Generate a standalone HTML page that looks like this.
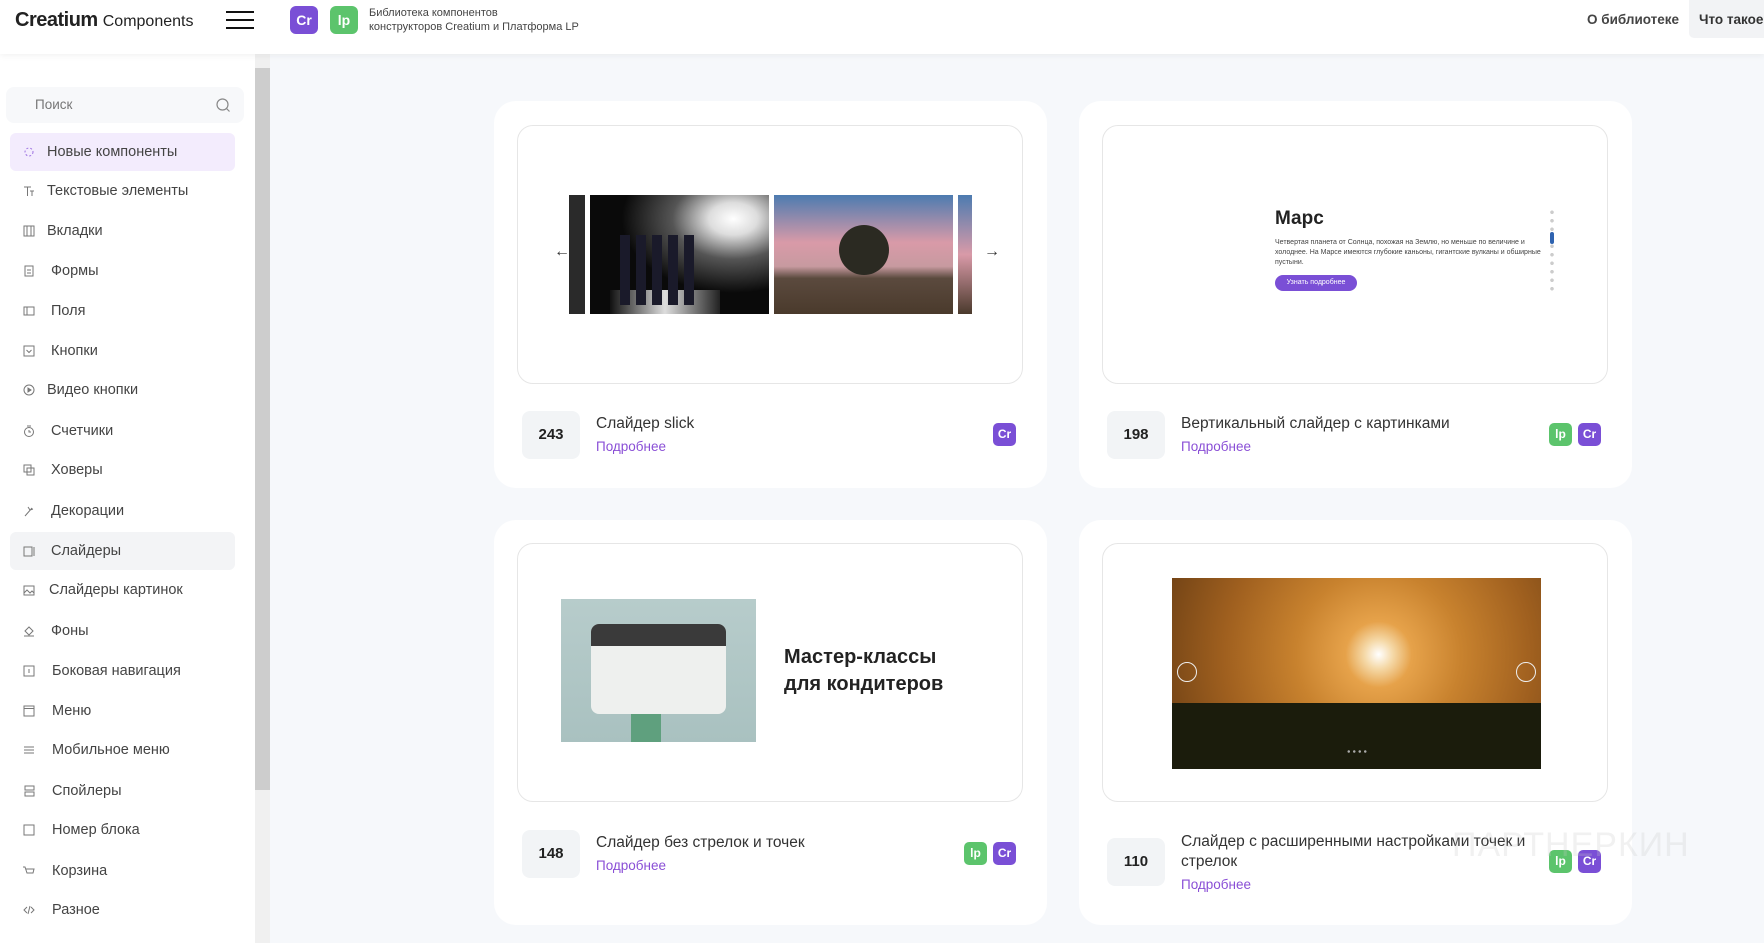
<!DOCTYPE html>
<html><head><meta charset="utf-8"><style>
*{margin:0;padding:0;box-sizing:border-box}
body{width:1764px;height:943px;overflow:hidden;background:#f6f8fb;font-family:"Liberation Sans","Noto Sans CJK SC",sans-serif;position:relative;color:#333}
.a{position:absolute}
.hdr{left:0;top:0;width:1764px;height:54px;background:#fff;box-shadow:0 2px 6px rgba(0,0,0,.05);z-index:5}
.side{left:0;top:54px;width:255px;height:889px;background:#fff}
.item{position:absolute;left:10px;width:225px;height:38px;border-radius:6px;font-size:14.5px;color:#444;line-height:38px}
.item span{position:absolute;left:37px;top:0}
.item svg{position:absolute;left:13px;top:13px}
.item svg *{stroke:#777}
.card{position:absolute;width:553px;background:#fff;border-radius:22px}
.prev{position:absolute;left:23px;width:506px;height:259px;border:1px solid #e6e6e6;border-radius:16px;background:#fff;overflow:hidden}
.num{position:absolute;left:28px;width:58px;height:48px;background:#f2f4f6;border-radius:8px;font-weight:bold;font-size:15px;text-align:center;line-height:48px;color:#222}
.ttl{position:absolute;left:102px;font-size:15.5px;color:#333}
.lnk{position:absolute;left:102px;font-size:13.5px;color:#8a4fd6}
.bd{position:absolute;width:23px;height:23px;border-radius:5px;color:#fff;font-weight:bold;font-size:12px;text-align:center;line-height:23px}
.pu{background:#7a4fd6}.gr{background:#5cc46c}
</style></head><body>
<div class="a hdr">
 <div class="a" style="left:15px;top:9px;font-size:20px;font-weight:bold;color:#222;letter-spacing:-.5px">Creatium <span style="font-weight:normal;font-size:16px;letter-spacing:0">Components</span></div>
 <div class="a" style="left:226px;top:11px;width:28px;height:2px;background:#111"></div>
 <div class="a" style="left:226px;top:19px;width:28px;height:2px;background:#111"></div>
 <div class="a" style="left:226px;top:27px;width:28px;height:2px;background:#111"></div>
 <div class="a bd pu" style="left:290px;top:6px;width:28px;height:28px;line-height:28px;border-radius:6px;font-size:14px">Cr</div>
 <div class="a bd gr" style="left:330px;top:6px;width:28px;height:28px;line-height:28px;border-radius:6px;font-size:14px">lp</div>
 <div class="a" style="left:369px;top:6px;font-size:11px;line-height:14px;color:#444">Библиотека компонентов<br>конструкторов Creatium и Платформа LP</div>
 <div class="a" style="left:1587px;top:12px;font-size:13.5px;font-weight:bold;color:#444">О библиотеке</div>
 <div class="a" style="left:1689px;top:0;width:75px;height:38px;background:#f2f3f5;border-radius:0 0 0 5px;font-size:13.5px;font-weight:bold;color:#333;padding:12px 0 0 10px;white-space:nowrap;overflow:hidden">Что такое</div>
</div>
<div class="a side">
 <div class="a" style="left:6px;top:33px;width:238px;height:36px;background:#f7f8fa;border-radius:8px;font-size:13.5px;color:#777;padding:10px 0 0 29px">Поиск
  <svg class="a" style="left:209px;top:10px" width="16" height="16" viewBox="0 0 16 16"><circle cx="7.5" cy="7.5" r="5.5" fill="none" stroke="#888" stroke-width="1.2"/><path d="M11.5 11.5l3 3" stroke="#888" stroke-width="1.2"/></svg></div>
</div>
<div class="a" style="left:255px;top:54px;width:15px;height:889px;background:#f0f0f0"></div>
<div class="a" style="left:255px;top:68px;width:15px;height:722px;background:#cdcdcd"></div>

<div class="item" style="top:133px;background:#f3ecfd"><svg width="12" height="12"><circle cx="6" cy="6" r="4" fill="none" style="stroke:#9b6fe0" stroke-dasharray="2 2"/></svg><span>Новые компоненты</span></div>
<div class="item" style="top:172px"><svg width="12" height="12"><path d="M1 2h7M4.5 2v9M7 6h4M9 6v5" fill="none"/></svg><span>Текстовые элементы</span></div>
<div class="item" style="top:212px"><svg width="12" height="12"><rect x="1" y="1" width="10" height="10" fill="none"/><path d="M4 1v10M8 1v10"/></svg><span>Вкладки</span></div>
<div class="item" style="top:252px"><svg width="12" height="12"><rect x="2" y="1" width="8" height="10" fill="none"/><path d="M4 5h4M4 8h4"/></svg><span style="left:41px">Формы</span></div>
<div class="item" style="top:292px"><svg width="12" height="12"><rect x="1" y="2" width="10" height="8" fill="none"/><path d="M4 2v8"/></svg><span style="left:41px">Поля</span></div>
<div class="item" style="top:332px"><svg width="12" height="12"><rect x="1" y="1" width="10" height="10" fill="none"/><path d="M3.5 5l2.5 2.5L8.5 5" fill="none"/></svg><span style="left:41px">Кнопки</span></div>
<div class="item" style="top:371px"><svg width="12" height="12"><circle cx="6" cy="6" r="5" fill="none"/><path d="M5 4v4l3-2z" fill="#777"/></svg><span>Видео кнопки</span></div>
<div class="item" style="top:412px"><svg width="12" height="12"><circle cx="6" cy="7" r="4.5" fill="none"/><path d="M4 1h4M6 5v2h2" fill="none"/></svg><span style="left:41px">Счетчики</span></div>
<div class="item" style="top:451px"><svg width="12" height="12"><rect x="1" y="1" width="7" height="7" fill="none"/><rect x="4" y="4" width="7" height="7" fill="none"/></svg><span style="left:41px">Ховеры</span></div>
<div class="item" style="top:492px"><svg width="12" height="12"><path d="M2 11L9 3M5 2l2 3 3-1" fill="none"/></svg><span style="left:41px">Декорации</span></div>
<div class="item" style="top:532px;background:#f3f4f6"><svg width="12" height="12"><rect x="1" y="2" width="8" height="9" fill="none"/><path d="M11 2v9"/></svg><span style="left:41px">Слайдеры</span></div>
<div class="item" style="top:571px"><svg width="12" height="12"><rect x="1" y="2" width="10" height="9" fill="none"/><path d="M1 9l3-3 3 3 2-2 2 2" fill="none"/></svg><span style="left:39px">Слайдеры картинок</span></div>
<div class="item" style="top:612px"><svg width="12" height="12"><path d="M2 6l4-4 4 4-4 4zM1 11h10" fill="none"/></svg><span style="left:41px">Фоны</span></div>
<div class="item" style="top:652px"><svg width="12" height="12"><rect x="1" y="1" width="10" height="10" fill="none"/><path d="M6 4v4"/></svg><span style="left:42px">Боковая навигация</span></div>
<div class="item" style="top:692px"><svg width="12" height="12"><rect x="1" y="1" width="10" height="10" fill="none"/><path d="M1 3.5h10"/></svg><span style="left:42px">Меню</span></div>
<div class="item" style="top:731px"><svg width="12" height="12"><path d="M1 3h10M1 6h10M1 9h10"/></svg><span style="left:42px">Мобильное меню</span></div>
<div class="item" style="top:772px"><svg width="12" height="12"><rect x="2" y="1" width="9" height="4" fill="none"/><rect x="2" y="7" width="9" height="4" fill="none"/></svg><span style="left:42px">Спойлеры</span></div>
<div class="item" style="top:811px"><svg width="12" height="12"><rect x="1" y="1" width="10" height="10" fill="none"/></svg><span style="left:42px">Номер блока</span></div>
<div class="item" style="top:852px"><svg width="12" height="12"><path d="M0 2h2l2 6h6l1-4H3" fill="none"/></svg><span style="left:42px">Корзина</span></div>
<div class="item" style="top:891px"><svg width="12" height="12"><path d="M4 3L1 6l3 3M8 3l3 3-3 3M7 2L5 10" fill="none"/></svg><span style="left:42px">Разное</span></div>

<div class="card" style="left:494px;top:101px;height:387px">
 <div class="prev" style="top:24px">
  <div class="a" style="left:51px;top:69px;width:16px;height:119px;background:#2a2a2a"></div>
  <div class="a" style="left:72px;top:69px;width:179px;height:119px;background:radial-gradient(ellipse at 80% 20%,#fff 0,#ddd 12%,#555 30%,#0a0a0a 55%)"><div class="a" style="left:20px;top:95px;width:110px;height:24px;background:linear-gradient(90deg,#111,#ddd,#222)"></div><div class="a" style="left:30px;top:40px;width:80px;height:70px;background:repeating-linear-gradient(90deg,#1a1a2a 0 10px,transparent 10px 16px)"></div></div>
  <div class="a" style="left:256px;top:69px;width:179px;height:119px;background:linear-gradient(#4d7bb0 0,#d99aa8 40%,#c79aa0 60%,#5b4a3e 70%,#4a3a2c 100%)"><div class="a" style="left:65px;top:30px;width:50px;height:50px;border-radius:50%;background:#2b2a22"></div></div>
  <div class="a" style="left:440px;top:69px;width:14px;height:119px;background:linear-gradient(#4d7bb0,#d99aa8,#4a3a2c)"></div>
  <div class="a" style="left:36px;top:117px;font-size:16px;color:#333">←</div>
  <div class="a" style="left:466px;top:117px;font-size:16px;color:#333">→</div>
 </div>
 <div class="num" style="top:310px">243</div>
 <div class="ttl" style="top:314px">Слайдер slick</div>
 <div class="lnk" style="top:338px">Подробнее</div>
 <div class="bd pu" style="left:499px;top:322px">Cr</div>
</div>
<div class="card" style="left:1079px;top:101px;height:387px">
 <div class="prev" style="top:24px">
  <div class="a" style="left:172px;top:82px;font-size:19px;font-weight:bold;color:#222">Марс</div>
  <div class="a" style="left:172px;top:112px;width:280px;font-size:7px;line-height:10px;color:#444">Четвертая планета от Солнца, похожая на Землю, но меньше по величине и холоднее. На Марсе имеются глубокие каньоны, гигантские вулканы и обширные пустыни.</div>
  <div class="a" style="left:172px;top:149px;width:82px;height:16px;border-radius:8px;background:#7a4fd6;color:#fff;font-size:7px;text-align:center;line-height:16px">Узнать подробнее</div>
  <div class="a" style="left:447px;top:82px;width:4px;height:84px;background:radial-gradient(circle,#ccc 1.6px,transparent 2px) 0 0/4px 8.5px"></div>
  <div class="a" style="left:447px;top:106px;width:4px;height:12px;border-radius:2px;background:#2f63b0"></div>
 </div>
 <div class="num" style="top:310px">198</div>
 <div class="ttl" style="top:314px">Вертикальный слайдер с картинками</div>
 <div class="lnk" style="top:338px">Подробнее</div>
 <div class="bd gr" style="left:470px;top:322px">lp</div>
 <div class="bd pu" style="left:499px;top:322px">Cr</div>
</div>
<div class="card" style="left:494px;top:520px;height:405px">
 <div class="prev" style="top:23px">
  <div class="a" style="left:43px;top:55px;width:195px;height:143px;background:linear-gradient(#b7cccb,#a9c1c0)"><div class="a" style="left:30px;top:25px;width:135px;height:90px;border-radius:8px;background:#eef0ee"></div><div class="a" style="left:30px;top:25px;width:135px;height:22px;background:#3a3a3a;border-radius:8px 8px 0 0"></div><div class="a" style="left:70px;top:115px;width:30px;height:28px;background:#5fa07e"></div></div>
  <div class="a" style="left:266px;top:100px;font-size:20px;line-height:27px;font-weight:bold;color:#222">Мастер-классы<br>для кондитеров</div>
 </div>
 <div class="num" style="top:310px">148</div>
 <div class="ttl" style="top:314px">Слайдер без стрелок и точек</div>
 <div class="lnk" style="top:338px">Подробнее</div>
 <div class="bd gr" style="left:470px;top:322px">lp</div>
 <div class="bd pu" style="left:499px;top:322px">Cr</div>
</div>
<div class="card" style="left:1079px;top:520px;height:405px">
 <div class="prev" style="top:23px">
  <div class="a" style="left:69px;top:34px;width:369px;height:191px;background:radial-gradient(circle at 56% 40%,#fff 0,#f5d9a8 6%,#e6a24a 14%,#c8822e 35%,#a0601f 65%,#6a3e14 100%)"><div class="a" style="left:0;top:125px;width:369px;height:66px;background:#1b1c0c"></div>
   <div class="a" style="left:5px;top:84px;width:20px;height:20px;border:1px solid #eee;border-radius:50%"></div>
   <div class="a" style="left:344px;top:84px;width:20px;height:20px;border:1px solid #eee;border-radius:50%"></div>
   <div class="a" style="left:174px;top:172px;width:22px;height:3px;background:radial-gradient(circle,#aaa 1px,transparent 1.5px) 0 0/5.5px 3px"></div></div>
 </div>
 <div class="num" style="top:318px">110</div>
 <div class="ttl" style="top:312px;width:370px;line-height:20px">Слайдер с расширенными настройками точек и стрелок</div>
 <div class="lnk" style="top:357px">Подробнее</div>
 <div class="bd gr" style="left:470px;top:330px">lp</div>
 <div class="bd pu" style="left:499px;top:330px">Cr</div>
</div>
<div class="a" style="left:1452px;top:826px;font-size:34px;color:rgba(200,200,200,.25);letter-spacing:1px">ПАРТНЕРКИН</div>
</body></html>
